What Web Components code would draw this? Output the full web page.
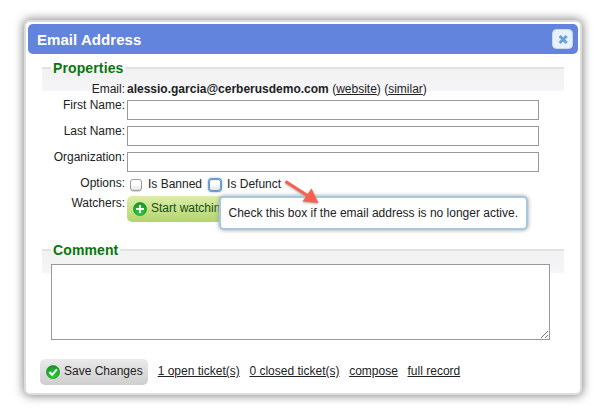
<!DOCTYPE html>
<html lang="en">
<head>
<meta charset="utf-8">
<title>Email Address</title>
<style>
html,body{margin:0;background:#fff}
body{width:602px;height:416px;overflow:hidden;box-sizing:border-box;padding:20px 0 0 24px;font:12px/15px "Liberation Sans",Arial,sans-serif;color:#222}
</style>
</head>
<body>
<popup-dialog heading="Email Address">
  <field-group heading="Properties" style="height:175px">
    <form-row label="Email:" style="--h:17px;--pt:1px"><b>alessio.garcia@cerberusdemo.com</b> (<text-link>website</text-link>) (<text-link>similar</text-link>)</form-row>
    <form-row label="First Name:" style="--h:26px"><text-box></text-box></form-row>
    <form-row label="Last Name:" style="--h:26px"><text-box></text-box></form-row>
    <form-row label="Organization:" style="--h:26px"><text-box></text-box></form-row>
    <form-row label="Options:" style="--h:20px"><check-box>Is Banned</check-box><check-box focused>Is Defunct</check-box></form-row>
    <form-row label="Watchers:" style="--h:27px"><icon-button icon="plus">Start watching</icon-button></form-row>
  </field-group>
  <field-group heading="Comment" style="height:110px"><text-area></text-area></field-group>
  <action-bar><icon-button icon="check">Save Changes</icon-button><text-link>1 open ticket(s)</text-link><text-link>0 closed ticket(s)</text-link><text-link>compose</text-link><text-link>full record</text-link></action-bar>
</popup-dialog>
<tool-tip>Check this box if the email address is no longer active.</tool-tip>
<pointer-arrow></pointer-arrow>
<script>
const define=(name,html,setup)=>customElements.define(name,class extends HTMLElement{
  connectedCallback(){
    if(this.shadowRoot)return;
    const t=document.createElement('template');
    t.innerHTML=html;
    this.attachShadow({mode:'open'}).append(t.content.cloneNode(true));
    if(setup)setup(this,this.shadowRoot);
  }
});
define('popup-dialog',`<style>
:host{display:block;box-sizing:border-box;width:558px;height:375px;border:2px solid #ddd;border-radius:6px;background:#fff;padding:2px;box-shadow:0 0 10px 1px #888}
header{height:30px;box-sizing:border-box;background:#6284dc;border-radius:5px;display:flex;align-items:center;justify-content:space-between;padding:1px 5px 0 9px;color:#fff}
h1{margin:0;font:bold 15px/20px "Liberation Sans",Arial,sans-serif;letter-spacing:.05px}
main{padding:6px 14px 0}
svg{display:block;margin-top:-2px}
</style><header><h1></h1><svg width="21" height="20" viewBox="0 0 21 20"><rect x=".5" y=".5" width="20" height="19" rx="4" fill="#e9f2fb" stroke="#c5dbec"/><path d="M8.7 8l5 5m0-5l-5 5" stroke="#67a4d5" stroke-width="3" stroke-linecap="square" fill="none"/></svg></header><main><slot></slot></main>`,(e,r)=>r.querySelector('h1').textContent=e.getAttribute('heading'));
define('field-group',`<style>
:host{display:block;width:522px;padding-top:7px;margin-bottom:7px;box-sizing:border-box}
section{border-top:2px solid #e2e2e2;background:linear-gradient(#f2f2f2,#f5f5f9) no-repeat 0 0/100% 22px}
h2{width:max-content;margin:-9px 0 0 9px;padding:0 2px;background:linear-gradient(#fff,#fff) no-repeat 0 0/100% 9px;color:#0a760e;font:bold 14px/16px "Liberation Sans",Arial,sans-serif;letter-spacing:.12px}
.body{padding:5px 0 0 9px}
</style><section><h2></h2><div class="body"><slot></slot></div></section>`,(e,r)=>r.querySelector('h2').textContent=e.getAttribute('heading'));
define('form-row',`<style>
:host{display:flex;height:var(--h);align-items:flex-start}
label{width:74px;text-align:right;margin-right:2px;padding-top:var(--pt,0);flex:none;white-space:nowrap}
.value{padding-top:var(--pt,0);white-space:nowrap;display:block}
</style><label></label><div class="value"><slot></slot></div>`,(e,r)=>r.querySelector('label').textContent=e.getAttribute('label'));
define('text-box',`<style>:host{display:block;box-sizing:border-box;width:412px;height:20px;margin-top:2px;border:1px solid #999;background:#fff}</style>`);
define('text-link',`<style>:host{display:inline;white-space:nowrap;color:#222;text-decoration:underline}</style><slot></slot>`);
define('check-box',`<style>
:host{display:inline-flex;align-items:center;vertical-align:top;height:15px;padding-left:3px;margin-right:4px;margin-top:1px}
i{box-sizing:border-box;width:12px;height:12px;border:1px solid #999;border-radius:3px;background:linear-gradient(#fff,#fff 35%,#e5e5e5);margin-right:6px;box-shadow:0 1px 1px #ddd}
:host([focused]) i{border-color:#6795c7;box-shadow:0 0 0 1px #6f9fd2,0 0 2px 1px #6fa3dc}
</style><i></i><span><slot></slot></span>`);
define('icon-button',`<style>
:host{display:flex;box-sizing:border-box;width:108px;height:26px;border-radius:5px;background:linear-gradient(#eaeaea,#cecece);padding:6px 0 0 6px;gap:4px;flex:none;white-space:nowrap;line-height:13px}
:host([icon=plus]){background:linear-gradient(#dcedaa,#b4d46d);color:#165016}
svg{flex:none}
</style><svg width="14" height="14" viewBox="0 0 14 14"><defs><radialGradient id="g" cx=".5" cy=".8" r=".8"><stop offset="0" stop-color="#27d532"/><stop offset="1" stop-color="#169329"/></radialGradient></defs><circle cx="7" cy="7" r="6.6" fill="url(#g)" stroke="#179027" stroke-width=".6"/><path fill="none" stroke="#fff" stroke-width="2"/></svg><span><slot></slot></span>`,(e,r)=>r.querySelector('path').setAttribute('d',e.getAttribute('icon')==='plus'?'M7 3v8M3 7h8':'M3.4 7l2.7 2.8 4.8-5.5'));
define('text-area',`<style>:host{display:flex;justify-content:flex-end;align-items:flex-end;box-sizing:border-box;width:499px;height:76px;margin-top:1px;border:1px solid #999;background:#fff}</style><svg width="9" height="9" viewBox="0 0 9 9" stroke="#555" stroke-width=".8"><path d="M1 8L8 1M5 8l3-3"/></svg>`);
define('action-bar',`<style>:host{display:flex;height:26px;align-items:flex-start;gap:9.7px;margin:3px 0 0 -2px;line-height:24px}</style><slot></slot>`);
define('tool-tip',`<style>:host{position:absolute;left:219px;top:196px;box-sizing:border-box;width:309px;height:34px;border:2px solid #a6c9e2;border-radius:5px;background:#fff;padding:8px 7.5px;box-shadow:0 0 4px #999;white-space:nowrap}</style><slot></slot>`);
define('pointer-arrow',`<style>:host{position:absolute;left:280px;top:176px}svg{display:block;filter:drop-shadow(0 1px 1px #aaa)}</style><svg width="44" height="32" viewBox="0 0 44 32"><path d="M5.5 5.5L29 20.5" stroke="#f9604f" stroke-width="3"/><path d="M38.5 27L31.5 12.5 22.5 25.5z" fill="#f9604f"/></svg>`);
</script>
</body>
</html>
